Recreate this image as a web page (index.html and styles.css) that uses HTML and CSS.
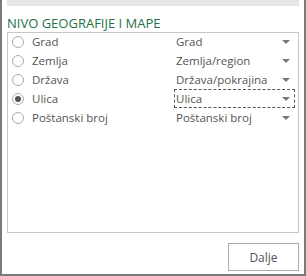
FILE: index.html
```html
<!DOCTYPE html>
<html lang="hr">
<head>
    <meta charset="UTF-8">
    <title>Nivo geografije i mape</title>
    <link rel="stylesheet" href="styles.css">
</head>
<body>
    <div class="pane">
        <div class="top-bar"></div>
        <h1 class="title">NIVO GEOGRAFIJE I MAPE</h1>

        <div class="list">
            <div class="rows">
                <div class="row">
                    <span class="radio"></span>
                    <span class="label">Grad</span>
                    <span class="select">Grad<span class="arrow"></span></span>
                </div>
                <div class="row">
                    <span class="radio"></span>
                    <span class="label">Zemlja</span>
                    <span class="select">Zemlja/region<span class="arrow"></span></span>
                </div>
                <div class="row">
                    <span class="radio"></span>
                    <span class="label">Država</span>
                    <span class="select">Država/pokrajina<span class="arrow"></span></span>
                </div>
                <div class="row">
                    <span class="radio checked"></span>
                    <span class="label">Ulica</span>
                    <span class="select focused">Ulica<span class="arrow"></span></span>
                </div>
                <div class="row">
                    <span class="radio"></span>
                    <span class="label">Poštanski broj</span>
                    <span class="select">Poštanski broj<span class="arrow"></span></span>
                </div>
            </div>
        </div>

        <div class="footer">
            <button class="btn">Dalje</button>
        </div>
    </div>
</body>
</html>
```

FILE: styles.css
```css
* {
    margin: 0;
    padding: 0;
    box-sizing: border-box;
}

body {
    font-family: 'Open Sans', 'Noto Sans', sans-serif;
    background: #fff;
    color: #555;
}

.pane {
    width: 306px;
    height: 276px;
    border: 2px solid #7a7a7a;
    border-top: none;
    padding: 0 5px;
    display: flex;
    flex-direction: column;
}

.top-bar {
    height: 6px;
    background: #e6e6e6;
}

.title {
    font-size: 13px;
    font-weight: normal;
    color: #217346;
    margin-top: 8px;
    line-height: 18px;
}

.list {
    border: 1px solid #c6c6c6;
    height: 201px;
}

.rows {
    margin-top: -1px;
}

.row {
    display: flex;
    align-items: center;
    height: 19px;
    font-size: 11.5px;
}

.radio {
    width: 12px;
    height: 12px;
    border: 1px solid #ababab;
    border-radius: 50%;
    margin-left: 4px;
    margin-right: 8px;
    display: flex;
    align-items: center;
    justify-content: center;
}

.radio.checked::after {
    content: '';
    width: 6px;
    height: 6px;
    border-radius: 50%;
    background: #555;
}

.label {
    width: 142px;
}

.select {
    flex: 1;
    height: 19px;
    margin-right: 3px;
    padding-left: 1px;
    display: flex;
    align-items: center;
    justify-content: space-between;
    border: 1px solid transparent;
}

.select.focused {
    border: 1px dashed #555;
}

.arrow {
    width: 0;
    height: 0;
    border-left: 4px solid transparent;
    border-right: 4px solid transparent;
    border-top: 4px solid #777;
    margin-right: 4px;
}

.footer {
    display: flex;
    justify-content: flex-end;
    padding-top: 10px;
}

.btn {
    width: 71px;
    height: 28px;
    background: #fff;
    border: 1px solid #ababab;
    font-family: 'Open Sans', 'Noto Sans', sans-serif;
    font-size: 12px;
    color: #555;
}
```
